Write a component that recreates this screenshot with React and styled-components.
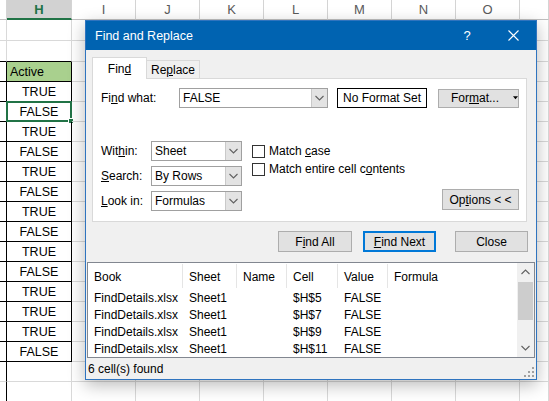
import React from 'react';
import styled, { createGlobalStyle } from 'styled-components';

const GlobalStyle = createGlobalStyle`
  html, body {
    margin: 0;
    padding: 0;
    background: #fff;
  }
  body {
    width: 549px;
    height: 401px;
    overflow: hidden;
    font-family: "Liberation Sans", Arial, sans-serif;
  }
  * {
    box-sizing: border-box;
  }
`;

const Screen = styled.div`
  position: relative;
  width: 549px;
  height: 401px;
  overflow: hidden;
`;

/* ---------- spreadsheet behind the dialog ---------- */

const Sheet = styled.div`
  display: grid;
  grid-template-columns: 7px 65px repeat(7, 64px) 1fr;
  grid-template-rows: 20px 21px 21px repeat(17, 20px);
  font-family: "Liberation Sans", Arial, sans-serif;
  font-size: 12.5px;
  color: #000;
`;

const ColHead = styled.div`
  display: flex;
  align-items: center;
  justify-content: center;
  font-size: 13px;
  background: ${p => (p.$active ? '#d2d2d2' : '#fff')};
  color: ${p => (p.$active ? '#217346' : '#5a5a5a')};
  font-weight: ${p => (p.$active ? 700 : 400)};
  border-right: 1px solid #d4d4d4;
  border-bottom: ${p => (p.$active ? '2px solid #217346' : '1px solid #c0c0c0')};
`;

const Cell = styled.div`
  position: relative;
  display: flex;
  align-items: center;
  justify-content: ${p => (p.$left ? 'flex-start' : 'center')};
  padding-left: ${p => (p.$left ? '3px' : '0')};
  padding-top: 1px;
  background: ${p => p.$fill || 'transparent'};
  border-right: 1px solid ${p => p.$right || '#d9d9d9'};
  border-bottom: 1px solid ${p => p.$bottom || '#d9d9d9'};
`;

const Selection = styled.span`
  position: absolute;
  left: -1px;
  top: -1px;
  right: -1px;
  bottom: -1px;
  border: 2px solid #217346;
`;

const FillHandle = styled.span`
  position: absolute;
  right: -4px;
  bottom: -4px;
  width: 6px;
  height: 6px;
  background: #217346;
  border: 1px solid #fff;
`;

/* ---------- dialog ---------- */

const Dialog = styled.div`
  position: absolute;
  left: 85px;
  top: 20px;
  width: 452px;
  height: 360px;
  border: 1px solid #2f74bf;
  background: #f0f0f0;
  box-shadow: 0 5px 16px rgba(0, 0, 0, 0.28);
  display: flex;
  flex-direction: column;
  font-family: "Liberation Sans", Arial, sans-serif;
  font-size: 12px;
  color: #000;
`;

const TitleBar = styled.div`
  height: 29px;
  flex: none;
  display: flex;
  align-items: center;
  background: #0063b1;
  color: #fff;
  padding-left: 9px;
`;

const Title = styled.div`
  flex: 1;
  font-size: 12.5px;
`;

const CaptionButton = styled.div`
  width: 46px;
  height: 29px;
  display: flex;
  align-items: center;
  justify-content: center;
  color: #fff;
  font-size: 13px;
`;

const Body = styled.div`
  flex: 1;
  display: flex;
  flex-direction: column;
  padding-top: 7px;
`;

const TabArea = styled.div`
  padding: 0 9px 0 6px;
`;

const TabStrip = styled.div`
  display: flex;
  align-items: flex-end;
  height: 21px;
`;

const Tab = styled.div`
  position: relative;
  z-index: 1;
  display: flex;
  align-items: center;
  justify-content: center;
  width: ${p => p.$w}px;
  height: ${p => (p.$selected ? 22 : 18)}px;
  margin-bottom: ${p => (p.$selected ? '-1px' : '0')};
  background: ${p => (p.$selected ? '#fff' : '#f0f0f0')};
  border: 1px solid #d9d9d9;
  border-bottom: none;
  border-left: ${p => (p.$selected ? '1px solid #d9d9d9' : 'none')};
  padding-top: ${p => (p.$selected ? '0' : '1px')};
`;

const Panel = styled.div`
  height: 144px;
  background: #fff;
  border: 1px solid #d9d9d9;
  padding: 9px 7px 10px 8px;
  display: flex;
  flex-direction: column;
`;

const FindRow = styled.div`
  display: flex;
  align-items: center;
  height: 20px;
`;

const Label = styled.div`
  width: ${p => p.$w}px;
  flex: none;
  display: flex;
  align-items: center;
  height: 20px;
`;

const Combo = styled.div`
  display: flex;
  flex: none;
  width: ${p => p.$w}px;
  height: 20px;
  border: 1px solid #a0a0a0;
  background: #fff;
`;

const ComboText = styled.span`
  flex: 1;
  display: flex;
  align-items: center;
  padding-left: 3px;
`;

const ComboArrow = styled.span`
  width: 16px;
  display: flex;
  align-items: center;
  justify-content: center;
  background: #e3e3e3;
  border-left: 1px solid #c9c9c9;
`;

const FormatBox = styled.div`
  width: 90px;
  height: 20px;
  margin-left: 9px;
  display: flex;
  align-items: center;
  justify-content: center;
  border: 1px solid #000;
  background: #fff;
`;

const Button = styled.div`
  flex: none;
  display: flex;
  align-items: center;
  justify-content: center;
  gap: ${p => (p.$menu ? '14px' : '0')};
  width: ${p => p.$w}px;
  height: ${p => p.$h || 21}px;
  margin-left: ${p => p.$ml || 0}px;
  background: #e1e1e1;
  border: ${p => (p.$focused ? '2px solid #0078d7' : '1px solid #adadad')};
  padding-left: ${p => (p.$menu ? '12px' : '0')};
`;

const Lower = styled.div`
  display: flex;
  margin-top: 33px;
`;

const FieldGrid = styled.div`
  display: grid;
  grid-template-columns: 50px 91px;
  grid-auto-rows: 20px;
  row-gap: 5px;
`;

const Checks = styled.div`
  display: flex;
  flex-direction: column;
  margin-left: 10px;
  padding-top: 1px;
`;

const CheckRow = styled.label`
  display: flex;
  align-items: center;
  gap: 4px;
  height: 18px;
`;

const CheckBox = styled.span`
  width: 13px;
  height: 13px;
  border: 1px solid #333;
  background: #fff;
`;

const OptionsWrap = styled.div`
  margin-left: auto;
  align-self: flex-end;
  margin-bottom: 1px;
`;

const ActionRow = styled.div`
  display: flex;
  justify-content: flex-end;
  margin-top: 9px;
  padding-right: 8px;
`;

const Results = styled.div`
  display: flex;
  height: 96px;
  margin: 10px 1px 0;
  border: 1px solid #828790;
  background: #fff;
`;

const ResultTable = styled.div`
  flex: 1;
  display: grid;
  grid-template-columns: 95px 54px 50px 51px 50px 1fr;
  grid-template-rows: 26px repeat(4, 17px);
  align-content: start;
`;

const HeadCell = styled.div`
  display: flex;
  align-items: center;
  padding-left: 6px;
  padding-top: 1px;
  border-right: ${p => (p.$last ? 'none' : '1px solid #e5e5e5')};
  margin: 1px 0 1px;
`;

const DataCell = styled.div`
  display: flex;
  align-items: center;
  padding-left: 6px;
`;

const ScrollBar = styled.div`
  width: 17px;
  display: flex;
  flex-direction: column;
  align-items: center;
  background: #f0f0f0;
`;

const ScrollArrow = styled.div`
  height: 18px;
  width: 100%;
  display: flex;
  align-items: center;
  justify-content: center;
`;

const Thumb = styled.div`
  width: 15px;
  height: 38px;
  margin-top: 1px;
  background: #cdcdcd;
`;

const ScrollTrack = styled.div`
  flex: 1;
`;

const StatusBar = styled.div`
  flex: 1;
  display: flex;
  align-items: center;
  justify-content: space-between;
  padding: 0 2px 0 2px;
`;

const Grip = styled.div`
  align-self: flex-end;
  margin-bottom: 2px;
  display: flex;
`;

const U = styled.span`
  text-decoration: underline;
  text-underline-offset: 1px;
`;

const Chevron = ({ up }) => (
  <svg width="9" height="6" viewBox="0 0 9 6">
    <polyline
      points={up ? '0.5,5 4.5,1 8.5,5' : '0.5,1 4.5,5 8.5,1'}
      fill="none"
      stroke="#606060"
      strokeWidth="1.1"
    />
  </svg>
);

const Select = ({ w, value }) => (
  <Combo $w={w}>
    <ComboText>{value}</ComboText>
    <ComboArrow>
      <Chevron />
    </ComboArrow>
  </Combo>
);

const CloseIcon = () => (
  <svg width="11" height="11" viewBox="0 0 11 11">
    <path d="M0.5 0.5 L10.5 10.5 M10.5 0.5 L0.5 10.5" stroke="#fff" strokeWidth="1.1" />
  </svg>
);

const SizeGrip = () => (
  <svg width="10" height="10" viewBox="0 0 10 10" fill="#a0a0a0">
    <rect x="8" y="0" width="2" height="2" />
    <rect x="4" y="4" width="2" height="2" />
    <rect x="8" y="4" width="2" height="2" />
    <rect x="0" y="8" width="2" height="2" />
    <rect x="4" y="8" width="2" height="2" />
    <rect x="8" y="8" width="2" height="2" />
  </svg>
);

const letters = ['', 'H', 'I', 'J', 'K', 'L', 'M', 'N', 'O', ''];
const values = ['TRUE', 'FALSE', 'TRUE', 'FALSE', 'TRUE', 'FALSE', 'TRUE', 'FALSE', 'TRUE', 'FALSE', 'TRUE', 'TRUE', 'TRUE', 'FALSE'];

// rows after the header: 2 blank, the "Active" heading, the values, 2 blank
const rows = [null, null, 'Active', ...values, null, null];
const found = ['$H$5', '$H$7', '$H$9', '$H$11'];

const SheetView = () => (
  <Sheet>
    {letters.map((l, i) => (
      <ColHead key={'h' + i} $active={l === 'H'}>{l}</ColHead>
    ))}
    {rows.map((text, r) => {
      const inTable = r >= 2 && r <= 2 + values.length;
      const aboveTable = r === 1;
      const afterTable = r > 2 + values.length;
      return letters.map((_, c) => {
        const tableCol = c <= 1;
        let right;
        let bottom;
        if (tableCol && (inTable || aboveTable)) bottom = '#000';
        if (tableCol && inTable) right = '#000';
        if (c === 0 && afterTable) right = '#000';
        const isHead = r === 2 && c === 1;
        const selected = r === 4 && c === 1;
        return (
          <Cell
            key={r + '-' + c}
            $right={right}
            $bottom={bottom}
            $left={isHead}
            $fill={isHead ? '#a9d08e' : undefined}
          >
            {c === 1 && text}
            {selected && (
              <Selection>
                <FillHandle />
              </Selection>
            )}
          </Cell>
        );
      });
    })}
  </Sheet>
);

const FindReplace = () => (
  <Dialog>
    <TitleBar>
      <Title>Find and Replace</Title>
      <CaptionButton>?</CaptionButton>
      <CaptionButton>
        <CloseIcon />
      </CaptionButton>
    </TitleBar>
    <Body>
      <TabArea>
        <TabStrip>
          <Tab $selected $w={55}>
            Fin<U>d</U>
          </Tab>
          <Tab $w={53}>
            Re<U>p</U>lace
          </Tab>
        </TabStrip>
        <Panel>
          <FindRow>
            <Label $w={78}>
              Fi<U>n</U>d what:
            </Label>
            <Select w={149} value="FALSE" />
            <FormatBox>No Format Set</FormatBox>
            <Button $w={81} $h={19} $ml={11} $menu>
              <span>
                For<U>m</U>at...
              </span>
              <svg width="6" height="4" viewBox="0 0 6 4">
                <polygon points="0,0 6,0 3,3.5" fill="#000" />
              </svg>
            </Button>
          </FindRow>
          <Lower>
            <FieldGrid>
              <Label $w={50}>
                Wit<U>h</U>in:
              </Label>
              <Select w={91} value="Sheet" />
              <Label $w={50}>
                <U>S</U>earch:
              </Label>
              <Select w={91} value="By Rows" />
              <Label $w={50}>
                <U>L</U>ook in:
              </Label>
              <Select w={91} value="Formulas" />
            </FieldGrid>
            <Checks>
              <CheckRow>
                <CheckBox />
                <span>
                  Match <U>c</U>ase
                </span>
              </CheckRow>
              <CheckRow>
                <CheckBox />
                <span>
                  Match entire cell c<U>o</U>ntents
                </span>
              </CheckRow>
            </Checks>
            <OptionsWrap>
              <Button $w={77}>
                <span>
                  Op<U>t</U>ions &lt; &lt;
                </span>
              </Button>
            </OptionsWrap>
          </Lower>
        </Panel>
      </TabArea>
      <ActionRow>
        <Button $w={74}>
          <span>
            F<U>i</U>nd All
          </span>
        </Button>
        <Button $w={73} $ml={11} $focused>
          <span>
            <U>F</U>ind Next
          </span>
        </Button>
        <Button $w={73} $ml={19}>
          Close
        </Button>
      </ActionRow>
      <Results>
        <ResultTable>
          <HeadCell>Book</HeadCell>
          <HeadCell>Sheet</HeadCell>
          <HeadCell>Name</HeadCell>
          <HeadCell>Cell</HeadCell>
          <HeadCell>Value</HeadCell>
          <HeadCell $last>Formula</HeadCell>
          {found.map(cell => (
            <React.Fragment key={cell}>
              <DataCell>FindDetails.xlsx</DataCell>
              <DataCell>Sheet1</DataCell>
              <DataCell />
              <DataCell>{cell}</DataCell>
              <DataCell>FALSE</DataCell>
              <DataCell />
            </React.Fragment>
          ))}
        </ResultTable>
        <ScrollBar>
          <ScrollArrow>
            <Chevron up />
          </ScrollArrow>
          <Thumb />
          <ScrollTrack />
          <ScrollArrow>
            <Chevron />
          </ScrollArrow>
        </ScrollBar>
      </Results>
      <StatusBar>
        <span>6 cell(s) found</span>
        <Grip>
          <SizeGrip />
        </Grip>
      </StatusBar>
    </Body>
  </Dialog>
);

export default function App() {
  return (
    <Screen>
      <GlobalStyle />
      <SheetView />
      <FindReplace />
    </Screen>
  );
}
